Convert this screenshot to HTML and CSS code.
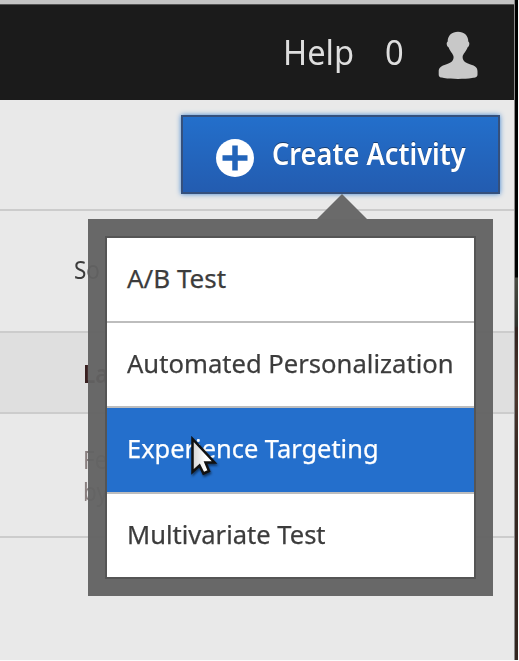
FILE: index.html
```html
<!DOCTYPE html>
<html lang="en">
<head>
<meta charset="utf-8">
<title>Activities</title>
<link rel="stylesheet" href="styles.css">
</head>
<body>
<div class="window">
  <div class="page">
    <header class="topbar">
      <span class="help">Help</span>
      <span class="count">0</span>
      <svg class="user" width="40" height="48" viewBox="0 0 40 48"><path d="M20 .8C26 .8 30.300 4.500 30.300 10.500C32 11.500 31.500 15.500 29.500 16.500C28.500 20 24.800 23 24.600 26C24.600 30.500 28 32 34 34C38.500 35.500 39.500 37.500 39.500 40.500V43.500C39.500 46.500 37 46.500 34 47C26 48.200 14 48.200 6 47C3 46.500 .7 46.500 .7 43.500V40.500C.7 37.500 2 35.500 6.500 34C12.500 32 15.600 30.500 15.600 26C15.400 23 11.700 20 10.700 16.500C8.500 15.500 8 11.500 9.700 10.500C9.700 4.500 14 .8 20 .8Z"/></svg>
    </header>
    <div class="toolbar">
      <button class="create">
        <svg class="plus" width="38" height="38" viewBox="0 0 38 38"><circle cx="19" cy="19" r="19"/><path d="M19 6.500V31.500M6.500 19H31.500"/></svg>
        <span class="create-label">Create Activity</span>
      </button>
    </div>
    <div class="row source"><span>So</span></div>
    <div class="row heading"><span>La</span></div>
    <div class="row detail"><span>Fe<br>by</span></div>
    <div class="rest"></div>
  </div>
  <div class="edge"></div>
</div>
<div class="popover">
  <svg class="arrow" width="50" height="25" viewBox="0 0 50 25"><path d="M0 25L25 0L50 25Z"/></svg>
  <ul class="menu">
    <li><span class="ab">A/B Test</span></li>
    <li><span class="automated">Automated Personalization</span></li>
    <li class="active"><span class="experience">Experience Targeting</span></li>
    <li><span class="multivariate">Multivariate Test</span></li>
  </ul>
</div>
<svg class="cursor" width="30" height="44" viewBox="0 0 30 44">
  <defs><linearGradient id="g" x1="0" x2="1"><stop offset="0" stop-color="#d5d5d5"/><stop offset=".6" stop-color="#fff"/></linearGradient></defs>
  <path class="pointer" d="M2.500 4V37L9.500 30.500L13.500 38.500L19 36L15.500 27.500H24.500Z"/>
</svg>
</body>
</html>
```
FILE: styles.css
```css
* { box-sizing: border-box; }
body {
  margin: 0;
  width: 519px;
  height: 661px;
  overflow: hidden;
  background: #fbfbfb;
  font-family: "Noto Sans", "Open Sans", sans-serif;
  color: #3c3c3c;
}
.window {
  display: grid;
  grid-template-columns: 514px 4px;
  height: 660px;
}
.page { display: flex; flex-direction: column; background: #e9e9e9; }
.edge {
  border-left: 1px solid #8b8b8b;
  background: linear-gradient(#000 0 277px, #4a4b42 278px, #30312b 326px, #33231f 328px, #4b352c 400px, #372822 450px, #33251f);
}
.topbar {
  height: 100px;
  flex: none;
  display: flex;
  align-items: flex-start;
  background: #1b1b1b;
  border-top: 4px solid #c4c4c4;
  box-shadow: inset 0 1px #555;
  color: #dedede;
  font-size: 34px;
  line-height: 44px;
  padding: 26px 0 0 283px;
}
.topbar span { display: block; transform: scaleX(.96); transform-origin: 0 50%; white-space: nowrap; }
.help { width: 102px; }
.count { width: 53px; }
.user { fill: #c8c8c8; margin-top: 1px; }
.toolbar {
  flex: none;
  height: 111px;
  border-bottom: 2px solid #cccccc;
  padding: 15px 0 0 181px;
}
.create {
  display: flex;
  align-items: center;
  width: 319px;
  height: 79px;
  padding: 0 0 0 33px;
  border: 2px solid #35507c;
  background: linear-gradient(#236fcb, #235cb0);
  box-shadow: 0 0 5px #3f86d3;
  color: #fff;
  font: 600 30px/40px "Noto Sans", "Open Sans", sans-serif;
}
.plus { fill: #fff; flex: none; margin-top: 7px; }
.plus path { stroke: #2264b9; stroke-width: 5.500; }
.create-label {
  margin: -2px 0 0 18px;
  white-space: nowrap;
  transform: scaleX(.907);
  transform-origin: 0 50%;
  text-shadow: 0 -1px #173e70;
}
.row {
  flex: none;
  border-bottom: 2px solid #cccccc;
  font-size: 25px;
}
.row span { display: inline-block; transform: scaleX(.9); transform-origin: 0 50%; }
.source { height: 122px; padding: 40px 0 0 74px; line-height: 36px; }
.heading { height: 81px; padding: 22px 0 0 83px; line-height: 36px; background: #dfdfdf; color: #392020; font-weight: 600; }
.detail { height: 124px; padding: 29px 0 0 83px; line-height: 32px; color: #8a8080; }
.rest { flex: 1; }
.popover {
  position: absolute;
  left: 88px;
  top: 219px;
  width: 405px;
  height: 377px;
  padding: 17px;
  background: rgba(98, 98, 98, .955);
}
.arrow { position: absolute; left: 229px; top: -25px; fill: #6a6a6a; }
.menu {
  list-style: none;
  margin: 0;
  padding: 0;
  width: 371px;
  height: 343px;
  border: 2px solid #555;
  background: #fff;
  display: grid;
  grid-template-rows: 85px 85px 86px 83px;
  font-size: 26px;
  -webkit-text-stroke: .25px;
}
.menu li {
  display: flex;
  align-items: center;
  padding: 0 0 4px 20px;
  border-bottom: 2px solid #bdbdbd;
  white-space: nowrap;
}
.menu li:last-child { border-bottom: 0; }
.menu .active { background: #246fcc; color: #fff; }
.menu span { transform-origin: 0 50%; }
.automated { transform: scaleX(.985); }
.experience { transform: scaleX(.978); }
.multivariate { transform: scaleX(.982); }
.cursor { position: absolute; left: 190px; top: 435px; filter: drop-shadow(1px 2px 1px rgba(0, 0, 0, .5)); }
.pointer { fill: url(#g); stroke: #111; stroke-width: 2.500; }
```
